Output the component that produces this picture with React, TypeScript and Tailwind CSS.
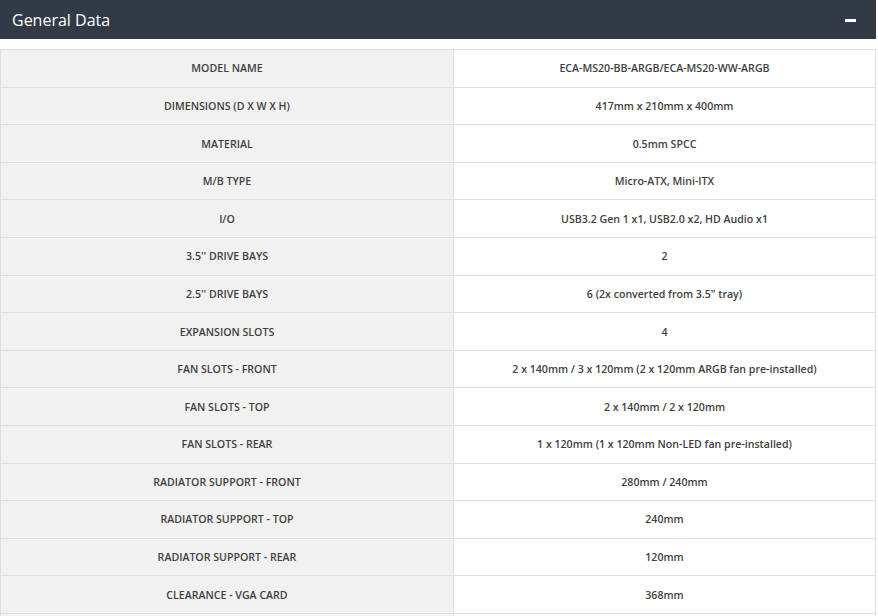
import React from 'react';

const specs: [string, string][] = [
  ['MODEL NAME', 'ECA-MS20-BB-ARGB/ECA-MS20-WW-ARGB'],
  ['DIMENSIONS (D X W X H)', '417mm x 210mm x 400mm'],
  ['MATERIAL', '0.5mm SPCC'],
  ['M/B TYPE', 'Micro-ATX, Mini-ITX'],
  ['I/O', 'USB3.2 Gen 1 x1, USB2.0 x2, HD Audio x1'],
  ["3.5'' DRIVE BAYS", '2'],
  ["2.5'' DRIVE BAYS", '6 (2x converted from 3.5" tray)'],
  ['EXPANSION SLOTS', '4'],
  ['FAN SLOTS - FRONT', '2 x 140mm / 3 x 120mm (2 x 120mm ARGB fan pre-installed)'],
  ['FAN SLOTS - TOP', '2 x 140mm / 2 x 120mm'],
  ['FAN SLOTS - REAR', '1 x 120mm (1 x 120mm Non-LED fan pre-installed)'],
  ['RADIATOR SUPPORT - FRONT', '280mm / 240mm'],
  ['RADIATOR SUPPORT - TOP', '240mm'],
  ['RADIATOR SUPPORT - REAR', '120mm'],
  ['CLEARANCE - VGA CARD', '368mm'],
  ['', ''],
];

export default function App() {
  return (
    <div className="h-[616px] w-[878px] overflow-hidden bg-white" style={{ fontFamily: '"Open Sans", sans-serif' }}>
      <div className="w-[876px]">
        {/* Header */}
        <div className="flex h-[39px] items-center justify-between bg-[#323a45] pl-3 pr-5">
          <span className="text-[16px] text-white">General Data</span>
          <span className="mt-[1px] block h-[3px] w-[11px] bg-white" />
        </div>

        {/* Spec table */}
        <table className="mt-[10px] w-full border-collapse text-[10.6px] font-semibold text-[#404040]">
          <tbody>
            {specs.map(([label, value], i) => (
              <tr key={i} className="h-[37.6px]">
                <td className="w-[453px] border border-[#dedede] bg-[#f1f1f1] pt-[2px] text-center">{label}</td>
                <td className="border border-[#dedede] bg-white pt-[2px] text-center">{value}</td>
              </tr>
            ))}
          </tbody>
        </table>
      </div>
    </div>
  );
}
